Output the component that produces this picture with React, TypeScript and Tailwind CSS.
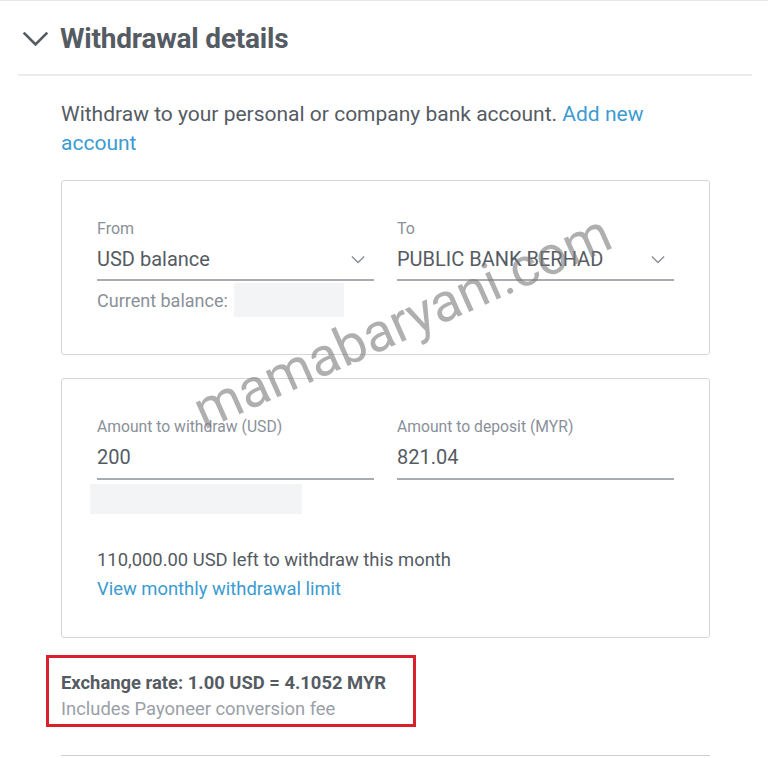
import React from "react";

function Chevron({ className }: { className?: string }) {
  return (
    <svg viewBox="0 0 16 10" className={className} fill="none" stroke="currentColor" strokeWidth="1.6">
      <path d="M1 1.5 L8 8.5 L15 1.5" />
    </svg>
  );
}

function SelectField({ label, value }: { label: string; value: string }) {
  return (
    <div>
      <div className="text-[16px] leading-[20px] text-[#8a9099]">{label}</div>
      <div className="flex items-center justify-between border-b-2 border-[#a8acb0] pb-[7px] mt-[7px]">
        <span className="text-[20px] leading-[26px] text-[#555b63]">{value}</span>
        <Chevron className="w-[14px] h-[9px] text-[#8a9099] mr-[9px]" />
      </div>
    </div>
  );
}

function InputField({ label, value }: { label: string; value: string }) {
  return (
    <div>
      <div className="text-[15.7px] leading-[20px] text-[#8a9099]">{label}</div>
      <div className="border-b-2 border-[#a8acb0] pb-[7px] mt-[7px]">
        <span className="text-[20px] leading-[26px] text-[#555b63]">{value}</span>
      </div>
    </div>
  );
}

export default function App() {
  return (
    <div
      className="relative w-[768px] h-[758px] bg-white overflow-hidden border-t border-[#e6e6e6]"
      style={{ fontFamily: "Roboto, 'Liberation Sans', sans-serif" }}
    >
      {/* Header */}
      <div className="mx-[18px] w-[734px] border-b-2 border-[#ececec] h-[75px] flex items-center pl-[4px] pt-[2px]">
        <Chevron className="w-[27px] h-[17px] text-[#555b63]" />
        <h1 className="ml-[11px] text-[28px] font-bold text-[#555b63] tracking-[-0.2px]">Withdrawal details</h1>
      </div>

      <div className="ml-[61px] w-[649px]">
        <div className="mt-[24px] text-[21px] leading-[29px] text-[#555b63]">
          <div>
            Withdraw to your personal or company bank account. <span className="text-[#3b9bd1]">Add new</span>
          </div>
          <div className="text-[#3b9bd1]">account</div>
        </div>

        {/* From / To card */}
        <div className="mt-[22px] border border-[#d6d6d6] rounded-[3px] h-[175px] px-[35px] pt-[38px]">
          <div className="grid grid-cols-2 gap-[23px]">
            <div>
              <SelectField label="From" value="USD balance" />
              <div className="flex items-center mt-[2px]">
                <span className="text-[18px] text-[#8a9099]">Current balance:</span>
                <span className="ml-[6px] w-[110px] h-[34px] bg-[#f3f4f5]" />
              </div>
            </div>
            <SelectField label="To" value="PUBLIC BANK BERHAD" />
          </div>
        </div>

        {/* Amount card */}
        <div className="mt-[23px] border border-[#d6d6d6] rounded-[3px] h-[260px] px-[35px] pt-[38px]">
          <div className="grid grid-cols-2 gap-[23px]">
            <InputField label="Amount to withdraw (USD)" value="200" />
            <InputField label="Amount to deposit (MYR)" value="821.04" />
          </div>
          <div className="-ml-[7px] mt-[4px] w-[212px] h-[30px] bg-[#f3f4f5]" />
          <div className="mt-[31px] text-[18.4px] leading-[29px] text-[#555b63]">
            110,000.00 USD left to withdraw this month
          </div>
          <div className="text-[18.4px] leading-[29px] text-[#3b9bd1]">View monthly withdrawal limit</div>
        </div>

        {/* Exchange rate */}
        <div className="-ml-[15px] mt-[17px] w-[370px] h-[72px] border-[3px] border-[#d9212c] pl-[12px] pt-[13px]">
          <div className="text-[18.4px] leading-[24px] font-bold text-[#555b63]">Exchange rate: 1.00 USD = 4.1052 MYR</div>
          <div className="mt-[2px] text-[18.4px] leading-[24px] text-[#9aa0a8]">Includes Payoneer conversion fee</div>
        </div>

        <div className="mt-[28px] border-t border-[#cfcfcf]" />
      </div>

      {/* watermark */}
      <div
        className="absolute left-[180px] top-[375px] text-[54px] text-[#7a7a7a]/60 pointer-events-none"
        style={{ transform: "rotate(-24deg)", transformOrigin: "left top" }}
      >
        mamabaryani.com
      </div>
    </div>
  );
}
